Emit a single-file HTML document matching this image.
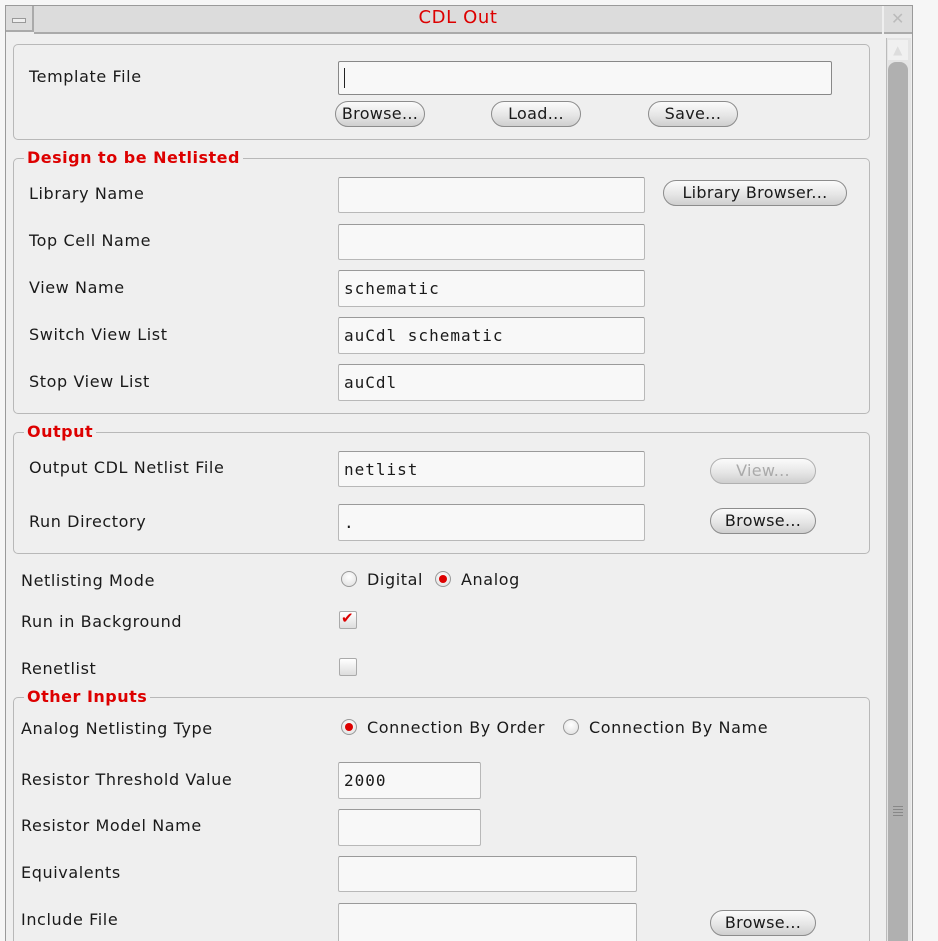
<!DOCTYPE html><html style="overflow:hidden"><head><style>
html,body{overflow:hidden}
body{margin:0;width:938px;height:941px;background:#f6f6f6;position:relative;overflow:hidden;font-family:"DejaVu Sans","Liberation Sans",sans-serif;font-size:16px;letter-spacing:0.6px;color:#1a1a1a}
.a{position:absolute}
.win{left:5px;top:5px;width:908px;height:960px;background:#efefef;border:1px solid #9a9a9a;box-sizing:border-box}
.grp{position:absolute;border:1px solid #b8b8b8;border-radius:5px;box-sizing:border-box}
.leg{position:absolute;color:#d00;font-weight:bold;background:#efefef;padding:0 3px;font-size:16px;line-height:18px;letter-spacing:0.5px}
.lbl{position:absolute;line-height:18px;white-space:nowrap}
.fld{position:absolute;background:#f8f8f8;border:1px solid #b8b8b8;border-top-color:#9a9a9a;border-radius:2px;box-sizing:border-box;font-family:"DejaVu Sans Mono","Liberation Mono",monospace;font-size:16px;letter-spacing:1px;padding:0 5px;display:flex;align-items:center}
.btn{position:absolute;height:26px;border:1px solid #8c8c8c;border-radius:13px;background:linear-gradient(#fbfbfb,#e6e6e6 55%,#cfcfcf);box-sizing:border-box;text-align:center;line-height:24px;font-size:16px;letter-spacing:0.3px;white-space:nowrap}
.dis{color:#aaa;border-color:#b0b0b0}
.rad{position:absolute;width:16px;height:16px;border-radius:50%;border:1px solid #999;background:radial-gradient(circle at 50% 35%,#fff,#ddd);box-sizing:border-box}
.rad.on::after{content:"";position:absolute;left:3px;top:3px;width:8px;height:8px;border-radius:50%;background:#d00}
.chk{position:absolute;width:18px;height:18px;border:1px solid #aaa;border-radius:2px;background:linear-gradient(#fff,#ddd);box-sizing:border-box}
</style></head><body>
<div class="a win"></div>
<div class="a" style="left:6px;top:6px;width:26px;height:26px;border-right:2px solid #aaa;background:#dcdcdc"></div>
<div class="a" style="left:12px;top:18px;width:12px;height:3px;border:1px solid #999;background:#eee"></div>
<div class="a" style="left:34px;top:6px;width:848px;height:26px;background:#dcdcdc;border-bottom:2px solid #aaa"></div>
<div class="a" style="left:6px;top:30px;width:28px;height:2px;background:#aaa"></div>
<div class="a" style="left:34px;top:7px;width:848px;text-align:center;color:#d00;font-size:18px;line-height:22px">CDL Out</div>
<div class="a" style="left:884px;top:6px;width:28px;height:26px;background:#dcdcdc;border-bottom:2px solid #aaa;color:#bbb;text-align:center;font-size:16px;line-height:26px">✕</div>
<div class="a" style="left:886px;top:38px;width:24px;height:903px;background:#e4e4e4;border-left:1px solid #bbb"></div>
<div class="a" style="left:888px;top:40px;width:20px;height:20px;color:#ddd;text-align:center;font-size:12px;line-height:20px;background:#f0f0f0">▲</div>
<div class="a" style="left:888px;top:62px;width:20px;height:879px;background:#b0b0b0;border-radius:8px 8px 0 0"></div>
<div class="a" style="left:893px;top:806px;width:10px;height:12px;background:repeating-linear-gradient(#888 0 1px,transparent 1px 3px)"></div>
<div class="grp" style="left:13px;top:44px;width:857px;height:96px"></div>
<div class="lbl" style="left:29px;top:68px">Template File</div>
<div class="fld" style="left:338px;top:61px;width:494px;height:34px;border-color:#888"><span style="border-left:1px solid #222;height:20px"></span></div>
<div class="btn" style="left:335px;top:101px;width:90px">Browse...</div>
<div class="btn" style="left:491px;top:101px;width:90px">Load...</div>
<div class="btn" style="left:648px;top:101px;width:90px">Save...</div>
<div class="grp" style="left:13px;top:158px;width:857px;height:256px"></div>
<div class="leg" style="left:24px;top:149px">Design to be Netlisted</div>
<div class="lbl" style="left:29px;top:185px">Library Name</div>
<div class="fld" style="left:338px;top:177px;width:307px;height:36px"></div>
<div class="btn" style="left:663px;top:180px;width:184px">Library Browser...</div>
<div class="lbl" style="left:29px;top:232px">Top Cell Name</div>
<div class="fld" style="left:338px;top:224px;width:307px;height:36px"></div>
<div class="lbl" style="left:29px;top:279px">View Name</div>
<div class="fld" style="left:338px;top:270px;width:307px;height:37px">schematic</div>
<div class="lbl" style="left:29px;top:326px">Switch View List</div>
<div class="fld" style="left:338px;top:317px;width:307px;height:37px">auCdl schematic</div>
<div class="lbl" style="left:29px;top:373px">Stop View List</div>
<div class="fld" style="left:338px;top:364px;width:307px;height:37px">auCdl</div>
<div class="grp" style="left:13px;top:432px;width:857px;height:122px"></div>
<div class="leg" style="left:24px;top:423px">Output</div>
<div class="lbl" style="left:29px;top:459px">Output CDL Netlist File</div>
<div class="fld" style="left:338px;top:451px;width:307px;height:36px">netlist</div>
<div class="btn dis" style="left:710px;top:458px;width:106px">View...</div>
<div class="lbl" style="left:29px;top:513px">Run Directory</div>
<div class="fld" style="left:338px;top:504px;width:307px;height:37px">.</div>
<div class="btn" style="left:710px;top:508px;width:106px">Browse...</div>
<div class="lbl" style="left:21px;top:572px">Netlisting Mode</div>
<div class="rad" style="left:341px;top:571px"></div><div class="lbl" style="left:367px;top:571px">Digital</div>
<div class="rad on" style="left:435px;top:571px"></div><div class="lbl" style="left:461px;top:571px">Analog</div>
<div class="lbl" style="left:21px;top:613px">Run in Background</div>
<div class="chk" style="left:339px;top:611px"><span style="position:absolute;left:1px;top:-3px;color:#d00;font-size:15px;font-weight:bold">✔</span></div>
<div class="lbl" style="left:21px;top:660px">Renetlist</div>
<div class="chk" style="left:339px;top:658px"></div>
<div class="grp" style="left:13px;top:697px;width:857px;height:260px"></div>
<div class="leg" style="left:24px;top:688px">Other Inputs</div>
<div class="lbl" style="left:21px;top:720px">Analog Netlisting Type</div>
<div class="rad on" style="left:341px;top:719px"></div><div class="lbl" style="left:367px;top:719px">Connection By Order</div>
<div class="rad" style="left:563px;top:719px"></div><div class="lbl" style="left:589px;top:719px">Connection By Name</div>
<div class="lbl" style="left:21px;top:771px">Resistor Threshold Value</div>
<div class="fld" style="left:338px;top:762px;width:143px;height:37px">2000</div>
<div class="lbl" style="left:21px;top:817px">Resistor Model Name</div>
<div class="fld" style="left:338px;top:809px;width:143px;height:37px"></div>
<div class="lbl" style="left:21px;top:864px">Equivalents</div>
<div class="fld" style="left:338px;top:856px;width:299px;height:36px"></div>
<div class="lbl" style="left:21px;top:911px">Include File</div>
<div class="fld" style="left:338px;top:903px;width:299px;height:40px"></div>
<div class="btn" style="left:710px;top:910px;width:106px">Browse...</div>
</body></html>
